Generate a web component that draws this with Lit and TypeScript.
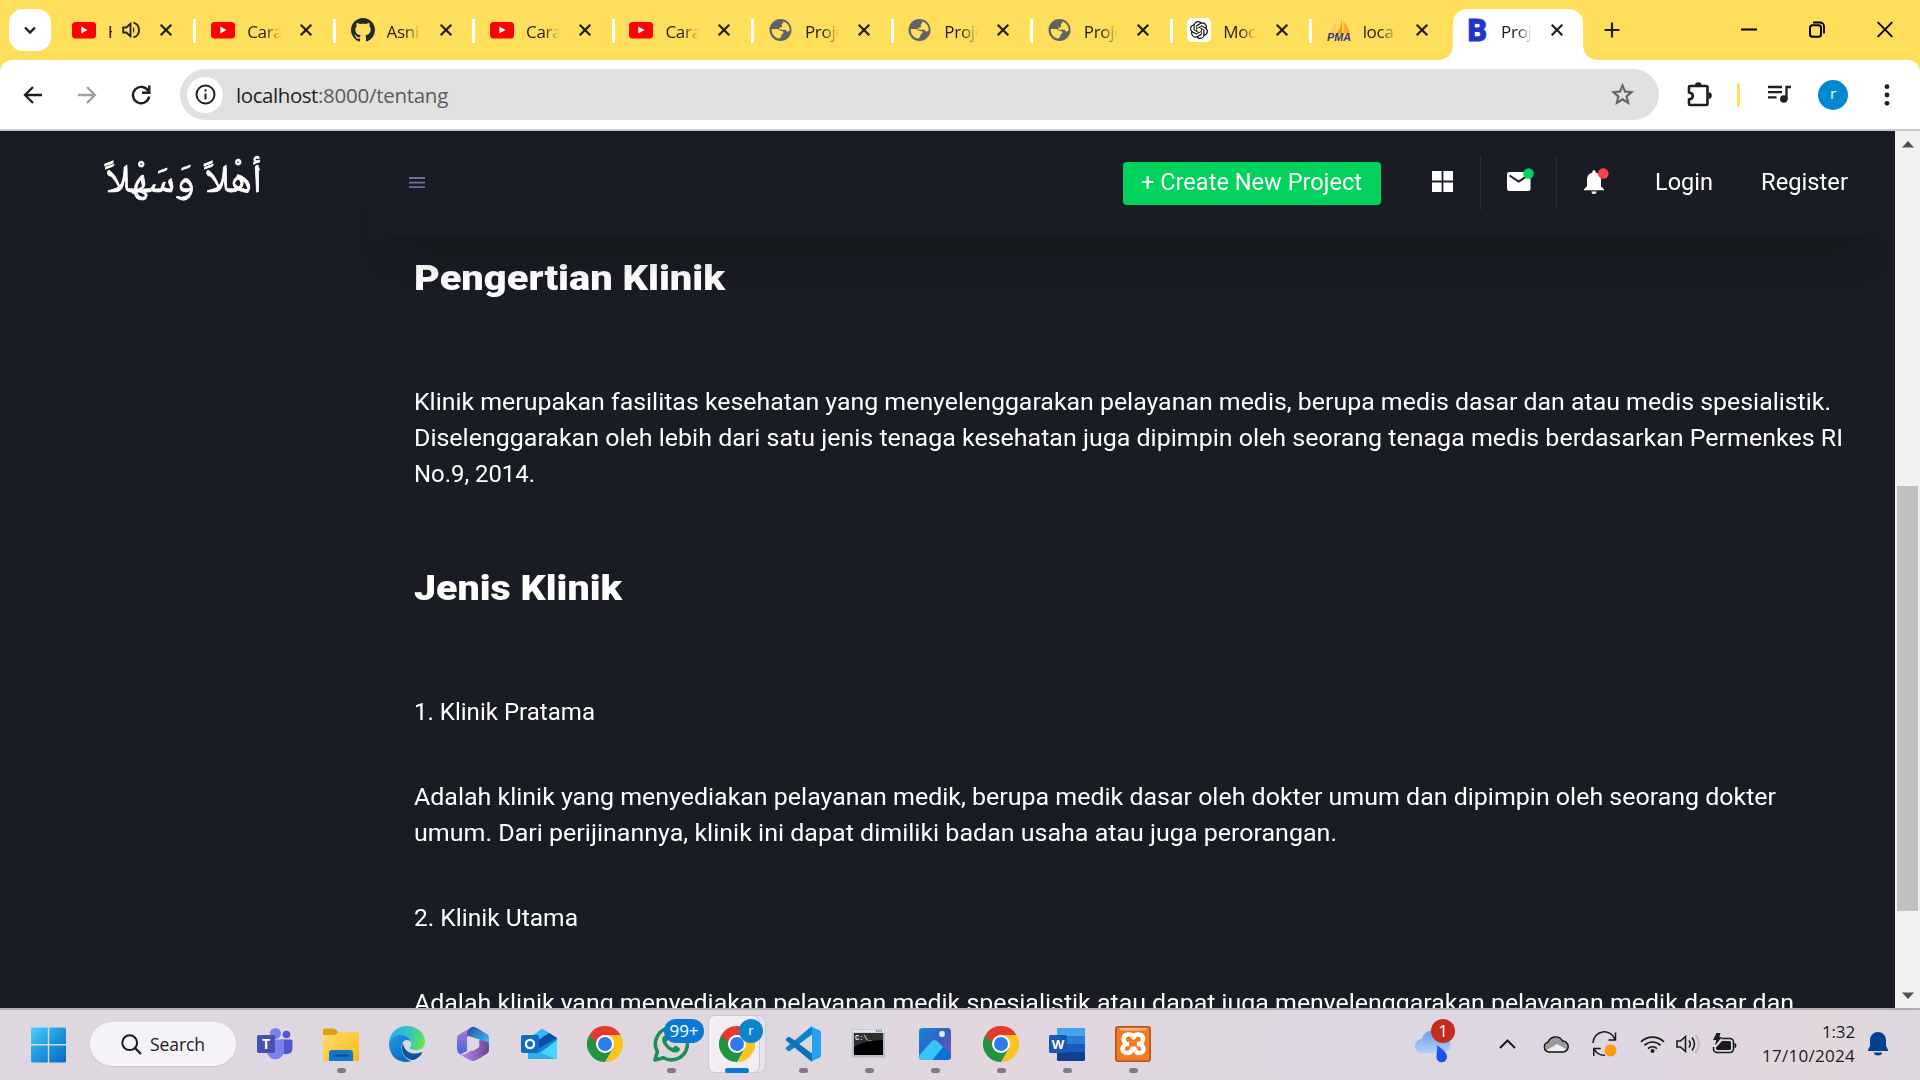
import { LitElement, html, svg, css, nothing } from "lit";
import { customElement, property } from "lit/decorators.js";

/** One line of text, fitted to a given measure by tracking or by widening. */
@customElement("fit-text")
class FitText extends LitElement {
  static styles = css`
    :host { display: block; white-space: nowrap; }
    .run { display: inline-block; white-space: pre; }
    .scaled { transform-origin: 0 50%; }
  `;
  @property() text = "";
  @property({ type: Number }) w = 0;
  @property({ type: Boolean }) scaled = false;
  render() {
    return html`<span class="run ${this.scaled ? "scaled" : ""}">${this.text}</span>`;
  }
  firstUpdated() {
    const run = this.renderRoot.querySelector(".run") as HTMLElement;
    const natural = run.getBoundingClientRect().width;
    if (!this.w || !natural) return;
    if (this.scaled) {
      this.style.width = `${this.w}px`;
      run.style.transform = `scaleX(${this.w / natural})`;
    } else run.style.letterSpacing = `${(this.w - natural) / this.text.length}px`;
  }
}

const youtube = svg`<svg width="24" height="24" viewBox="0 0 24 24"><rect y="4" width="24" height="16.400" rx="3.500" fill="#f00"/><path d="M9.300 8.600v7l6.200-3.500z" fill="#fff"/></svg>`;
const github = svg`<svg width="24" height="24" viewBox="0 0 16 16"><path fill="#24292f" d="M8 0C3.58 0 0 3.58 0 8c0 3.54 2.29 6.53 5.47 7.59.4.07.55-.17.55-.38 0-.19-.01-.82-.01-1.49-2.01.37-2.53-.49-2.69-.94-.09-.23-.48-.94-.82-1.13-.28-.15-.68-.52-.01-.53.63-.01 1.08.58 1.23.82.72 1.21 1.87.87 2.33.66.07-.52.28-.87.51-1.07-1.78-.2-3.64-.89-3.64-3.95 0-.87.31-1.59.82-2.15-.08-.2-.36-1.02.08-2.12 0 0 .67-.21 2.2.82.64-.18 1.32-.27 2-.27s1.36.09 2 .27c1.53-1.04 2.2-.82 2.2-.82.44 1.1.16 1.92.08 2.12.51.56.82 1.27.82 2.15 0 3.07-1.87 3.75-3.65 3.95.29.25.54.73.54 1.48 0 1.07-.01 1.93-.01 2.2 0 .21.15.46.55.38A8.01 8.01 0 0 0 16 8c0-4.42-3.58-8-8-8z"/></svg>`;
const globe = svg`<svg width="24" height="24" viewBox="0 0 24 24"><circle cx="11.500" cy="12" r="11" fill="#5f6368"/><path fill="#ffde5c" d="M14.500 3.500c3 .9 5.500 3.600 6.100 6.700v2.500c-.9.500-1.700 1-2.600.8-.9-.3-.7-1.600-1.600-1.800-1-.2-1.700.3-2.600 0h-2.600c-.9-.2-1.300-1.500-.6-2.100.7-.5 1.700 0 2.300-.7.600-.8-.5-1.500-.2-2.300.4-.8 1.500-.9 1.800-3.100zM2.800 11h5.300c1.500.2 2.200 1.300 3.400 1.800 1 .3 2.300 0 2.900 1 .5 1.200-.7 2-1.500 2.700-.9.700-.4 1.900-1.100 2.700-.5.600-1.300.9-1.700 1.300C6 20 2.400 16.300 2.800 11z"/></svg>`;
const gpt = svg`<svg width="24" height="24" viewBox="0 0 24 24"><rect width="24" height="24" rx="5" fill="#fff"/><path transform="translate(3 3) scale(.75)" fill="#111" d="M22.2819 9.8211a5.9847 5.9847 0 0 0-.5157-4.9108 6.0462 6.0462 0 0 0-6.5098-2.9A6.0651 6.0651 0 0 0 4.9807 4.1818a5.9847 5.9847 0 0 0-3.9977 2.9 6.0462 6.0462 0 0 0 .7427 7.0966 5.98 5.98 0 0 0 .511 4.9107 6.051 6.051 0 0 0 6.5146 2.9001A5.9847 5.9847 0 0 0 13.2599 24a6.0557 6.0557 0 0 0 5.7718-4.2058 5.9894 5.9894 0 0 0 3.9977-2.9001 6.0557 6.0557 0 0 0-.7475-7.0729zm-9.022 12.6081a4.4755 4.4755 0 0 1-2.8764-1.0408l.1419-.0804 4.7783-2.7582a.7948.7948 0 0 0 .3927-.6813v-6.7369l2.02 1.1686a.071.071 0 0 1 .038.052v5.5826a4.504 4.504 0 0 1-4.4945 4.4944zm-9.6607-4.1254a4.4708 4.4708 0 0 1-.5346-3.0137l.142.0852 4.783 2.7582a.7712.7712 0 0 0 .7806 0l5.8428-3.3685v2.3324a.0804.0804 0 0 1-.0332.0615L9.74 19.9502a4.4992 4.4992 0 0 1-6.1408-1.6464zM2.3408 7.8956a4.485 4.485 0 0 1 2.3655-1.9728V11.6a.7664.7664 0 0 0 .3879.6765l5.8144 3.3543-2.0201 1.1685a.0757.0757 0 0 1-.071 0l-4.8303-2.7865A4.504 4.504 0 0 1 2.3408 7.872zm16.5963 3.8558L13.1038 8.364 15.1192 7.2a.0757.0757 0 0 1 .071 0l4.8303 2.7913a4.4944 4.4944 0 0 1-.6765 8.1042v-5.6772a.79.79 0 0 0-.407-.667zm2.0107-3.0231l-.142-.0852-4.7735-2.7818a.7759.7759 0 0 0-.7854 0L9.409 9.2297V6.8974a.0662.0662 0 0 1 .0284-.0615l4.8303-2.7866a4.4992 4.4992 0 0 1 6.6802 4.66zM8.3065 12.863l-2.02-1.1638a.0804.0804 0 0 1-.038-.0567V6.0742a4.4992 4.4992 0 0 1 7.3757-3.4537l-.142.0805L8.704 5.459a.7948.7948 0 0 0-.3927.6813zm1.0976-2.3654l2.602-1.4998 2.6069 1.4998v2.9994l-2.5974 1.4997-2.6067-1.4997Z"/></svg>`;
const pma = svg`<svg width="24" height="24" viewBox="0 0 24 24"><path d="M9.500 1 8 15.500H1.500C5 12 8 7 9.500 1z" fill="#fcc27a"/><path d="M14 0c1 5-1 12-4.500 15.500H15C15.500 10 15.400 4 14 0z" fill="#f89c0e"/><path d="M16 3c3.500 3.500 6 8 7 12.500h-7C17 11 17 7 16 3z" fill="#fca53a"/><text x="0" y="23" font-family="Liberation Sans" font-weight="bold" font-style="italic" font-size="10" textLength="24" lengthAdjust="spacingAndGlyphs" fill="#35387d">PMA</text></svg>`;
const bee = svg`<svg width="24" height="24" viewBox="0 0 24 24"><text x="-.5" y="23" font-family="Roboto" font-weight="900" font-size="31" textLength="19.500" lengthAdjust="spacingAndGlyphs" fill="#2233c9" stroke="#2233c9" stroke-width=".9">B</text></svg>`;
const cross = svg`<svg class="x" width="14" height="14" viewBox="0 0 14 14"><path d="m1.700 1.700 10.600 10.600m0-10.600L1.700 12.300" stroke="#1f1f1f" stroke-width="2.200"/></svg>`;
const speaker = svg`<svg class="audio" width="18" height="18" viewBox="0 0 18 18"><path d="M1.200 6.500h3L8.500 2.800v12.400L4.200 11.500h-3z" fill="none" stroke="#1f1f1f" stroke-width="1.800"/><path d="M11 5.800c1.800 1.500 1.800 5 0 6.400z" fill="#1f1f1f"/><path d="M11.500 1.600c7.300 2 7.300 12.800 0 14.800" fill="none" stroke="#1f1f1f" stroke-width="1.800"/></svg>`;

interface Tab { icon: unknown; title: string; sound?: boolean; active?: boolean; }
const TABS: Tab[] = [
  { icon: youtube, title: "H", sound: true },
  { icon: youtube, title: "Cara" },
  { icon: github, title: "Asni" },
  { icon: youtube, title: "Cara" },
  { icon: youtube, title: "Cara" },
  { icon: globe, title: "Proje" },
  { icon: globe, title: "Proje" },
  { icon: globe, title: "Proje" },
  { icon: gpt, title: "Moc" },
  { icon: pma, title: "loca" },
  { icon: bee, title: "Proj", active: true },
];

@customElement("browser-chrome")
class BrowserChrome extends LitElement {
  static styles = css`
    :host { display: block; height: 131px; font-family: "Open Sans", "Noto Sans", sans-serif; color: #1f1f1f; background: #ffde5c; }
    svg { display: block; flex: none; }
    .strip { display: flex; height: 60px; }
    .drop { width: 42px; height: 42px; margin: 9px 6px 0 9px; border-radius: 14px; background: #fff; display: grid; place-items: center; flex: none; }
    .tab { box-sizing: border-box; width: 139.450px; height: 60px; padding: 0 0 0 14.700px; display: flex; align-items: center; position: relative; flex: none; }
    .tab::after { content: ""; width: 3px; height: 24px; background: #fff; position: absolute; right: 0; top: 19px; }
    .tab.last::after, .tab.active::after { display: none; }
    .label { width: 35px; margin: 3px 17px 0 12px; overflow: hidden; font-size: 17px; letter-spacing: -.3px; line-height: 26px; white-space: nowrap; -webkit-mask-image: linear-gradient(90deg, #000 50%, transparent 98%); mask-image: linear-gradient(90deg, #000 50%, transparent 98%); }
    .label.tiny { width: 4px; margin: 3px 10px 0 12px; -webkit-mask-image: none; mask-image: none; }
    .audio { margin-right: 19px; }
    .active { width: 130px; height: 51px; margin: 9px 0 0 1.500px; padding-bottom: 9px; background: #fff; border-radius: 14px 14px 0 0; }
    .active .label { width: 32px; margin: 3px 17px 0 9.500px; }
    .active::before { content: ""; position: absolute; left: -14px; bottom: 0; width: 14px; height: 14px; background: radial-gradient(circle at 0 0, transparent 13.500px, #fff 14px); }
    .flare { position: absolute; right: -14px; bottom: 0; width: 14px; height: 14px; background: radial-gradient(circle at 100% 0, transparent 13.500px, #fff 14px); }
    .plus { margin: 22px 0 0 21.500px; }
    .win { display: flex; gap: 52px; margin: 21px 27px 0 auto; }
    .bar { display: flex; align-items: center; height: 69px; background: #fff; border-radius: 12px 12px 0 0; border-bottom: 2px solid #cacaca; }
    .back { margin-left: 21px; }
    .fwd { margin-left: 30px; }
    .reload { margin-left: 30px; }
    .omni { box-sizing: border-box; display: flex; align-items: center; width: 1479px; height: 51px; margin-left: 27px; padding: 0 23px 0 7px; border-radius: 26px; background: #e0e0e0; font-size: 20.500px; }
    .info { width: 36px; height: 36px; border-radius: 50%; background: #fff; display: grid; place-items: center; margin-right: 13px; }
    .url { display: flex; }
    .rest { color: #5b5b5b; }
    .star { margin-left: auto; }
    .ext { margin-left: 26px; }
    .sep { width: 3px; height: 24px; background: #ffde5c; border-radius: 2px; margin-left: 24px; }
    .media { margin-left: 27px; }
    .avatar { width: 30px; height: 30px; border-radius: 50%; background: #0288d1; color: #fff; font-size: 15px; line-height: 27px; text-align: center; margin-left: 26px; }
    .dots { margin-left: 36px; }
  `;
  render() {
    return html`
      <div class="strip">
        <div class="drop"><svg width="12" height="10" viewBox="0 0 12 10"><path d="m1 2.500 5 5 5-5" fill="none" stroke="#1f1f1f" stroke-width="2.400"/></svg></div>
        ${TABS.map((t, i) => html`
          <div class="tab ${t.active ? "active" : ""} ${i === TABS.length - 2 ? "last" : ""}">
            ${t.icon}
            <span class="label ${t.sound ? "tiny" : ""}">${t.title}</span>
            ${t.sound ? speaker : nothing}${cross}
            ${t.active ? html`<span class="flare"></span>` : nothing}
          </div>`)}
        <svg class="plus" width="16" height="16" viewBox="0 0 16 16"><path d="M8 .5v15M.5 8h15" stroke="#1f1f1f" stroke-width="2.200"/></svg>
        <div class="win">
          <svg width="16" height="17" viewBox="0 0 16 17"><path d="M0 8.500h16" stroke="#000" stroke-width="2"/></svg>
          <svg width="16" height="17" viewBox="0 0 16 17"><rect x="1" y="4.300" width="11" height="11.500" rx="2.500" fill="none" stroke="#000" stroke-width="2"/><path d="M4 1.500h7a4 4 0 0 1 4 4v7" fill="none" stroke="#000" stroke-width="1.800"/></svg>
          <svg width="16" height="17" viewBox="0 0 16 17"><path d="m.7 1.200 14.600 14.600m0-14.600L.7 15.800" stroke="#000" stroke-width="1.800"/></svg>
        </div>
      </div>
      <div class="bar">
        <svg class="back" width="24" height="24" viewBox="0 0 24 24"><path d="M21 12H4.500M12 4l-8 8 8 8" fill="none" stroke="#1f1f1f" stroke-width="2.300"/></svg>
        <svg class="fwd" width="24" height="24" viewBox="0 0 24 24"><path d="M3 12h16.500M12 4l8 8-8 8" fill="none" stroke="#a0a0a0" stroke-width="2.300"/></svg>
        <svg class="reload" width="24" height="24" viewBox="0 0 24 24"><path d="M19.600 8.700A8.200 8.200 0 1 0 20.200 13.500" fill="none" stroke="#1f1f1f" stroke-width="2.400"/><path d="M20.300 2.500v7.300H13" fill="none" stroke="#1f1f1f" stroke-width="2.400"/></svg>
        <div class="omni">
          <div class="info"><svg width="21" height="21" viewBox="0 0 21 21"><circle cx="10.500" cy="10.500" r="9" fill="none" stroke="#1f1f1f" stroke-width="2"/><path d="M10.500 9.500v6M10.500 5.300v2.200" stroke="#1f1f1f" stroke-width="2"/></svg></div>
          <div class="url"><fit-text text="localhost" w="82"></fit-text><fit-text class="rest" text=":8000/tentang" w="130"></fit-text></div>
          <svg class="star" width="27" height="27" viewBox="0 0 24 24"><path fill="#5f6368" stroke="#5f6368" stroke-width=".3" d="m22 9.240-7.190-.62L12 2 9.190 8.630 2 9.240l5.460 4.730L5.820 21 12 17.270 18.180 21l-1.630-7.030L22 9.240zM12 15.400l-3.760 2.270 1-4.280-3.320-2.880 4.380-.38L12 6.100l1.710 4.040 4.380.38-3.320 2.880 1 4.280L12 15.400z"/></svg>
        </div>
        <svg class="ext" width="28" height="28" viewBox="0 0 28 28"><path d="M5 5h16.500a1 1 0 0 1 1 1v17a1 1 0 0 1-1 1H5a1 1 0 0 1-1-1v-4.700c5-.5 5-6.300 0-6.800V6a1 1 0 0 1 1-1z" fill="none" stroke="#1f1f1f" stroke-width="2.600" stroke-linejoin="round"/><path d="M10 4.500a3.300 3.300 0 0 1 6.600 0M23.500 11.300a3.300 3.300 0 0 1 0 6.600" fill="#1f1f1f"/></svg>
        <div class="sep"></div>
        <svg class="media" width="25" height="20" viewBox="0 0 25 20"><path d="M1 2h14M1 7.200h14M1 12.400h8.500M24 2h-4.500v12" fill="none" stroke="#1f1f1f" stroke-width="2.300"/><circle cx="16.800" cy="14" r="3.800" fill="#1f1f1f"/></svg>
        <div class="avatar">r</div>
        <svg class="dots" width="6" height="24" viewBox="0 0 6 24"><g fill="#1f1f1f"><circle cx="3" cy="3.700" r="2.400"/><circle cx="3" cy="12" r="2.400"/><circle cx="3" cy="20.300" r="2.400"/></g></svg>
      </div>`;
  }
}

@customElement("clinic-page")
class ClinicPage extends LitElement {
  static styles = css`
    :host { display: flex; height: 877px; overflow: hidden; background: #191c24; color: #fff; font-family: Roboto, "Noto Sans", sans-serif; }
    svg { display: block; flex: none; }
    .site { flex: 1; display: grid; grid-template: 105px 1fr / 366px 1fr; min-width: 0; overflow: hidden; }
    .brand { padding: 16px 0 0 106px; font-family: "Times New Roman", "Noto Naskh Arabic", "DejaVu Sans", serif; font-size: 40px; line-height: 64px; -webkit-text-stroke: .7px #fff; }
    .nav { background: #191c24; display: flex; align-items: center; padding: 0 0 1px 43px; position: relative; z-index: 1; box-shadow: 0 44px 44px -42px #101011; }
    .create { display: flex; width: 222px; height: 43px; margin-left: 698px; padding: 0 18px; background: #00d25b; border-radius: 4px; font-size: 23px; line-height: 41px; }
    .line { width: 1px; height: 54px; background: #2c2e33; }
    .grid { margin: 0 27px 4px 51px; }
    .mail { margin: 0 22px 7px 26px; }
    .bell { margin: 0 46px 4px 26px; }
    .link { font-size: 23px; line-height: 30px; }
    .link + .link { margin-left: 48px; }
    .body { grid-column: 2; padding: 21px 31px 0 48px; min-width: 0; }
    .h { font-size: 34.500px; font-weight: 900; line-height: 42px; }
    .rule { height: 1px; margin: 24px 0 60px; background: #171920; }
    .rule.even { margin: 24px 0; }
    .p { font-size: 24px; line-height: 36px; }
    .h.next { margin-top: 75px; }
    .scroll { width: 25px; background: #f1f1f1; display: flex; flex-direction: column; align-items: center; }
    .up { margin-top: 10px; }
    .thumb { width: 21px; height: 425px; margin-top: 338px; background: #c1c1c1; }
    .down { margin: auto 0 9px; }
  `;
  render() {
    return html`
      <div class="site">
        <div class="brand"><fit-text scaled text="أهْلاً وَسَهْلاً" w="156"></fit-text></div>
        <div class="nav">
          <svg width="16" height="12" viewBox="0 0 16 12"><path d="M0 1h16M0 5.600h16M0 10.200h16" stroke="#6c7293" stroke-width="1.800"/></svg>
          <div class="create"><fit-text scaled text="+ Create New Project" w="221"></fit-text></div>
          <svg class="grid" width="21" height="21" viewBox="0 0 21 21"><path d="M0 0h9.600v9.600H0zM11.400 0H21v9.600h-9.600zM0 11.400h9.600V21H0zM11.400 11.400H21V21h-9.600z" fill="#fff"/></svg>
          <div class="line"></div>
          <svg class="mail" width="27" height="24" viewBox="0 0 27 24"><rect y="4" width="23.500" height="19" rx="2.500" fill="#fff"/><path d="m2.500 7.500 9.200 6 9.200-6" fill="none" stroke="#191c24" stroke-width="2"/><circle cx="21.500" cy="5.500" r="5.300" fill="#00d25b"/></svg>
          <div class="line"></div>
          <svg class="bell" width="26" height="27" viewBox="0 0 26 27"><path d="M11 2.200c.9 0 1.600.7 1.600 1.600v.7c3.300.8 5.400 3.700 5.400 7.200v6.500l3 3v1H1v-1l3-3v-6.500C4 8.200 6.100 5.300 9.400 4.500v-.7c0-.9.7-1.600 1.600-1.600zM8.500 23.400h5a2.500 2.500 0 0 1-5 0z" fill="#fff"/><circle cx="20.300" cy="5.500" r="5.300" fill="#fc424a"/></svg>
          <fit-text scaled class="link" text="Login" w="58"></fit-text>
          <fit-text scaled class="link" text="Register" w="87"></fit-text>
        </div>
        <div class="body">
          <fit-text scaled class="h" text="Pengertian Klinik" w="311"></fit-text>
          <div class="rule"></div>
          <fit-text scaled class="p" text="Klinik merupakan fasilitas kesehatan yang menyelenggarakan pelayanan medis, berupa medis dasar dan atau medis spesialistik." w="1417"></fit-text>
          <fit-text scaled class="p" text="Diselenggarakan oleh lebih dari satu jenis tenaga kesehatan juga dipimpin oleh seorang tenaga medis berdasarkan Permenkes RI" w="1429"></fit-text>
          <fit-text scaled class="p" text="No.9, 2014." w="121"></fit-text>
          <fit-text scaled class="h next" text="Jenis Klinik" w="208"></fit-text>
          <div class="rule"></div>
          <fit-text scaled class="p" text="1. Klinik Pratama" w="181"></fit-text>
          <div class="rule even"></div>
          <fit-text scaled class="p" text="Adalah klinik yang menyediakan pelayanan medik, berupa medik dasar oleh dokter umum dan dipimpin oleh seorang dokter" w="1362"></fit-text>
          <fit-text scaled class="p" text="umum. Dari perijinannya, klinik ini dapat dimiliki badan usaha atau juga perorangan." w="923"></fit-text>
          <div class="rule even"></div>
          <fit-text scaled class="p" text="2. Klinik Utama" w="164"></fit-text>
          <div class="rule even"></div>
          <fit-text scaled class="p" text="Adalah klinik yang menyediakan pelayanan medik spesialistik atau dapat juga menyelenggarakan pelayanan medik dasar dan" w="1380"></fit-text>
        </div>
      </div>
      <div class="scroll">
        <svg class="up" width="12" height="7" viewBox="0 0 12 7"><path d="M6 0 0 6.500h12z" fill="#505050"/></svg>
        <div class="thumb"></div>
        <svg class="down" width="12" height="7" viewBox="0 0 12 7"><path d="M6 7 0 .5h12z" fill="#505050"/></svg>
      </div>`;
  }
}

const teams = svg`<svg width="36" height="36" viewBox="0 0 36 36"><circle cx="29.500" cy="8.500" r="3.800" fill="#5059c9"/><path d="M24 13.500h10a1.500 1.500 0 0 1 1.500 1.500v7.500a6 6 0 0 1-11.500 2z" fill="#5059c9"/><circle cx="18.500" cy="7.500" r="5.500" fill="#7b83eb"/><path d="M10.500 13.500h15a1.500 1.500 0 0 1 1.500 1.500v10a8.500 8.500 0 0 1-17 0z" fill="#7b83eb"/><rect y="9" width="18" height="18" rx="1.800" fill="#464eb8"/><text x="9" y="23" text-anchor="middle" font-family="Open Sans" font-weight="bold" font-size="14" fill="#fff">T</text></svg>`;
const folder = svg`<svg width="36" height="36" viewBox="0 0 36 36"><defs><linearGradient id="fo" x2="1" y2="1"><stop stop-color="#ffdc74"/><stop offset="1" stop-color="#fdb813"/></linearGradient></defs><path d="M0 12V4a1.500 1.500 0 0 1 1.500-1.500h9.300c1.600 0 2.600 2.500 4.500 3V12z" fill="#e0a006"/><path d="M0 9h11.500c2 0 2.600-3 5-3H34.500A1.500 1.500 0 0 1 36 7.500v26a1.500 1.500 0 0 1-1.500 1.500h-33A1.500 1.500 0 0 1 0 33.500z" fill="url(#fo)"/><path d="M6 35v-8a3 3 0 0 1 3-3h18a3 3 0 0 1 3 3v8z" fill="#0f78c8"/><path d="M11 29.500h14" stroke="#0a4f8f" stroke-width="2" stroke-linecap="round"/></svg>`;
const edge = svg`<svg width="36" height="36" viewBox="0 0 36 36"><defs><linearGradient id="e1" y1=".3" x2="1" y2=".5"><stop stop-color="#2faee8"/><stop offset=".55" stop-color="#30c6c4"/><stop offset="1" stop-color="#6be24e"/></linearGradient><linearGradient id="e2" x2=".6" y2="1"><stop stop-color="#1d9de0"/><stop offset="1" stop-color="#0a6ac8"/></linearGradient></defs><path d="M0 18C0 7 8 0 18 0s18 7 18 15.500c0 5.500-4 8.700-8.500 8.700-4 0-6.500-1.200-6.500-2.700 0-.8 1.300-1.500 1.300-4 0-3-4-6-9.300-6C6.500 11.500 1 14 0 18z" fill="url(#e1)"/><path d="M0 18c.5-5 5-9 11-9 5.500 0 11 3.500 11 8.500 0-2-2-3.500-4.300-3.500-3 0-5.200 3-5.200 7.500 0 6 4 12.500 10 13.500C9.500 38.800 0 30 0 18z" fill="url(#e2)"/><path d="M14 17c-3 7 1 17 10.500 17 3.500-1 7-4 8.700-7 .3-.6-.2-1-.8-.7C25 29.500 15 27 14 17z" fill="#10529d"/></svg>`;
const m365 = svg`<svg width="36" height="36" viewBox="0 0 36 36"><defs><linearGradient id="m1" x2="0" y2="1"><stop stop-color="#b57bdc"/><stop offset="1" stop-color="#3d67d6"/></linearGradient><linearGradient id="m2" x2="1" y2="1"><stop stop-color="#1d4fa8"/><stop offset="1" stop-color="#4bd4f8"/></linearGradient><linearGradient id="m3" x2="1"><stop stop-color="#c58df5"/><stop offset="1" stop-color="#6d4591"/></linearGradient></defs><path d="M17 1 4 8.500Q2 9.600 2 12v11q0 3 3 5.500l7-3.500V11l5-3z" fill="url(#m1)"/><path d="M17 1q2-.5 4 .5l11 6.500q2 1.200 2 3.500v13l-9.500-6v-5L12 9.500Q12 3 17 1z" fill="url(#m2)"/><path d="M34 18v6q0 2.500-2 3.800l-11 6.500q-3 1.500-6 0L4 28q5 1.500 8-1l12.500-7v-6Q32 14 34 18z" fill="url(#m3)"/><path d="m18 11.800 5.800 3.300v6.400L18 25l-5.800-3.500v-6.400z" fill="#ddd7e0"/></svg>`;
const outlook = svg`<svg width="36" height="36" viewBox="0 0 36 36"><path d="M7 13 21 3l15 9v19a2 2 0 0 1-2 2H9a2 2 0 0 1-2-2z" fill="#1682d4"/><path d="M11 10 21 3l7 4-14 9z" fill="#35b8f1"/><path d="m28 7 8 5-18 10V14z" fill="#0a4ea6"/><path d="M36 14v17a2 2 0 0 1-2 2H11z" fill="#45d6fa"/><path d="m7 21 27 12H9a2 2 0 0 1-2-2z" fill="#2eaee9"/><rect y="9" width="18" height="18" rx="1.800" fill="#0f6cc4"/><circle cx="9" cy="18" r="4.100" fill="none" stroke="#fff" stroke-width="2.300"/></svg>`;
const chrome = svg`<svg width="36" height="36" viewBox="0 0 36 36"><path d="M18 9h15.590A18 18 0 0 1 18 36l8-13.500z" fill="#fcc31e"/><path d="M2.410 9A18 18 0 0 0 18 36l7.800-13.500L18 18z" fill="#229342"/><path d="M2.410 9A18 18 0 0 1 33.590 9H18a9 9 0 0 0-8.500 12z" fill="#e33b2e"/><path d="M2.410 9 10.200 22.500 12 20z" fill="#229342"/><circle cx="18" cy="18" r="9" fill="#fff"/><circle cx="18" cy="18" r="7" fill="#2f7aec"/></svg>`;
const whatsapp = svg`<svg width="36" height="36" viewBox="0 0 36 36"><path d="M2 34l2.400-8.500A16 16 0 1 1 10.500 31.700z" fill="none" stroke="#1c8f58" stroke-width="3.600" stroke-linejoin="round"/><path d="M12.500 9.500c-1.500 0-3.500 2-3.300 4.800.3 5 7.800 12.300 13 12.300 3 0 4.800-1.800 4.800-3.800 0-1-4-3.300-5-3-1 .3-1.500 2.200-2.600 2-2-.5-5.200-3.600-5.800-5.400-.2-1 1.400-1.500 1.500-2.600 0-1-1.500-4.300-2.600-4.300z" fill="#1c8f58"/></svg>`;
const vscode = svg`<svg width="36" height="36" viewBox="0 0 36 36"><path d="M1 23.200 3.200 25q1 .6 2-.2L27 8.500V0L1 21.500q-.8.800 0 1.700z" fill="#0a84cf"/><path d="M1 12.800 3.200 11q1-.6 2 .2L27 27.500V36L1 14.500q-.8-.8 0-1.700z" fill="#0b72ba"/><path d="m25.500.2 9 4.100Q36 5 36 6.500v23q0 1.500-1.500 2.200l-9 4.100q1.500-.8 1.500-3V3q0-2-1.500-2.800z" fill="#27a0ef"/></svg>`;
const cmd = svg`<svg width="36" height="36" viewBox="0 0 36 36"><rect x="1" y="3.500" width="33" height="28" rx="1" fill="#b6bcc2"/><rect x="1.500" y="4" width="32" height="2.500" fill="#e3e8ec"/><path d="M25 5h6" stroke="#52708c" stroke-width="1.300" stroke-dasharray="1.300 1"/><rect x="3" y="7" width="29" height="22" fill="#000"/><path d="M3 7h29v7Q14 14 3 21z" fill="#303030"/><text x="4" y="13.500" font-family="Liberation Mono" font-size="7" font-weight="bold" fill="#eee">C:\\_</text></svg>`;
const photos = svg`<svg width="36" height="36" viewBox="0 0 36 36"><defs><linearGradient id="ph" x2="1" y2=".8"><stop stop-color="#1584d8"/><stop offset=".6" stop-color="#355fc0"/><stop offset="1" stop-color="#7d55ad"/></linearGradient><clipPath id="pc"><rect x="2" y="2" width="32" height="32" rx="3.500"/></clipPath></defs><g clip-path="url(#pc)"><rect x="2" y="2" width="32" height="32" fill="url(#ph)"/><path d="m12 34 10.500-13q2.500-2.500 5 0L38 32v6z" fill="#0a72d4"/><path d="M-2 34 14.500 15.500q3-3 6 0L26 21 13 37z" fill="#36c5f4"/><circle cx="25" cy="8" r="2.900" fill="#e8eefa"/></g></svg>`;
const word = svg`<svg width="36" height="36" viewBox="0 0 36 36"><rect x="8" y="2" width="28" height="33" rx="1.500" fill="#103f91"/><path d="M8 3.500A1.500 1.500 0 0 1 9.500 2h25A1.500 1.500 0 0 1 36 3.500V10H8z" fill="#41a5ee"/><path d="M8 10h28v8H8z" fill="#2b7cd3"/><path d="M8 18h28v8H8z" fill="#185abd"/><rect y="9" width="18" height="18" rx="1.500" fill="#1a55b8"/><text x="9" y="23" text-anchor="middle" font-family="Open Sans" font-weight="bold" font-size="13" fill="#fff">W</text></svg>`;
const xampp = svg`<svg width="36" height="36" viewBox="0 0 36 36"><rect x=".8" y=".8" width="34.400" height="34.400" rx="2.500" fill="#f47a20" stroke="#b5561a" stroke-width="1.600"/><path d="M4 2h28l-2 2.500H6z" fill="#fbb88a"/><path d="M13.500 18H24M18.500 11.500c-1.500-4.500-10-4-10 1.200 0 2.600 1.300 3.600 2.400 5.300-1.600 1.200-3.400 2.500-3.400 5.300 0 5 8.500 5 9.500.2l1-1.500h1l1 1.500c1 4.800 8.500 4.800 8.500-.2 0-2.800-1.500-4.100-3-5.300 1.100-1.700 2.500-2.700 2.500-5.300 0-5.200-8-5.700-9.500-1.200z" fill="none" stroke="#fff" stroke-width="4.400" stroke-linecap="round" stroke-linejoin="round"/><path d="M14 18h8" stroke="#f47a20" stroke-width="5"/></svg>`;

interface App { icon: unknown; mark?: string; badge?: string; active?: boolean; }
const APPS: App[] = [
  { icon: teams },
  { icon: folder, mark: "dot" },
  { icon: edge },
  { icon: m365 },
  { icon: outlook },
  { icon: chrome },
  { icon: whatsapp, mark: "dot", badge: "99+" },
  { icon: chrome, mark: "run", badge: "r", active: true },
  { icon: vscode, mark: "dot" },
  { icon: cmd, mark: "dot" },
  { icon: photos, mark: "dot" },
  { icon: chrome, mark: "dot" },
  { icon: word, mark: "dot" },
  { icon: xampp, mark: "dot" },
];

@customElement("task-bar")
class TaskBar extends LitElement {
  static styles = css`
    :host { box-sizing: border-box; display: flex; align-items: center; height: 72px; border-top: 2px solid #b3aeb4; color: #1b1b1b; font-family: "Open Sans", "Noto Sans", sans-serif; background: linear-gradient(90deg, #ded7df 0, #dfd7e0 45%, #e3d6df 53%, #dcd7df 63%, #ddd7e4 82%, #e3d6dd 95%, #ddd7df 100%); }
    svg { display: block; flex: none; }
    .start { margin-left: 31px; margin-bottom: 1px; }
    .search { box-sizing: border-box; display: flex; align-items: center; width: 146px; height: 44px; margin: 0 6px 2px 23px; padding-left: 31px; gap: 8px; border-radius: 22px; background: #f5f3f7; box-shadow: 0 1px 1px #c9c3cb; font-size: 17.500px; flex: none; }
    .app { position: relative; display: grid; place-items: center; width: 66px; height: 56px; margin-bottom: 2px; flex: none; }
    .app > svg { position: relative; z-index: 1; }
    .tile { position: absolute; inset: 0 11px 0 5px; border-radius: 6px; background: #f1edf3; box-shadow: 0 0 0 1px #cfc9d2; }
    .under { position: absolute; inset: 0 5px 0 20px; border-radius: 6px; background: #e8e3ea; box-shadow: 0 0 0 1px #cfc9d2; }
    .dot, .run { position: absolute; bottom: -1px; left: 28.500px; width: 9px; height: 5px; border-radius: 3px; background: #807b82; z-index: 1; }
    .run { left: 21px; width: 24px; background: #0a78d4; }
    .badge { position: absolute; z-index: 2; background: #0a78d4; color: #fff; }
    .count { left: 26px; top: 3px; width: 40px; height: 24px; border-radius: 12px; font-size: 17px; line-height: 24px; text-align: center; }
    .who { left: 35px; top: 3px; width: 24px; height: 24px; border-radius: 50%; font-size: 13px; line-height: 22px; text-align: center; background: #0b84cc; }
    .tray { display: flex; align-items: center; margin-left: auto; padding: 0 32px 2px 0; }
    .weather { position: relative; margin-right: 46px; }
    .alert { position: absolute; left: 17px; top: -6px; width: 24px; height: 24px; border-radius: 50%; background: #c42b1c; color: #fff; font-size: 17px; line-height: 23px; text-align: center; }
    .clock { display: flex; flex-direction: column; align-items: flex-end; width: 93px; margin: 0 13px 0 25px; font-size: 17px; line-height: 24.500px; }
    .s1 { margin-right: 27px; } .s2 { margin-right: 23px; } .s3 { margin-right: 23px; } .s4 { margin-right: 11px; } .s5 { margin-right: 11px; }
  `;
  render() {
    return html`
      <svg class="start" width="36" height="36" viewBox="0 0 36 36"><defs><linearGradient id="w" gradientUnits="userSpaceOnUse" x2="36" y2="36"><stop stop-color="#4fd0ff"/><stop offset=".5" stop-color="#1e96e0"/><stop offset="1" stop-color="#0468c8"/></linearGradient></defs><path fill="url(#w)" d="M1.500.5h15.300v16.600H0V2A1.500 1.500 0 0 1 1.500.5zM18.200.5H33.500A1.500 1.500 0 0 1 35 2v15.100H18.200zM0 18.500h16.800V35.500H1.500A1.500 1.500 0 0 1 0 34zM18.200 18.500H35V34a1.500 1.500 0 0 1-1.500 1.500H18.200z"/></svg>
      <div class="search">
        <svg width="21" height="21" viewBox="0 0 21 21"><circle cx="8.700" cy="8.700" r="7.400" fill="none" stroke="#1b1b1b" stroke-width="2"/><path d="m14 14 6 6" stroke="#1b1b1b" stroke-width="2.200"/></svg>
        <fit-text text="Search" w="55"></fit-text>
      </div>
      ${APPS.map((a) => html`
        <div class="app">
          ${a.active ? html`<span class="under"></span><span class="tile"></span>` : nothing}
          ${a.icon}
          ${a.mark ? html`<span class=${a.mark}></span>` : nothing}
          ${a.badge ? html`<span class="badge ${a.active ? "who" : "count"}">${a.badge}</span>` : nothing}
        </div>`)}
      <div class="tray">
        <div class="weather">
          <svg width="39" height="38" viewBox="0 0 39 38"><defs><linearGradient id="cl" x2="0" y2="1"><stop stop-color="#6c9de8"/><stop offset="1" stop-color="#b0d0fb"/></linearGradient></defs><path d="M8 28a7 7 0 0 1 0-14 10.500 10.500 0 0 1 20-2 8 8 0 0 1 1 16z" fill="url(#cl)"/><path d="M23 20c5 4 10 7.500 10 12a5.300 5.300 0 0 1-10.600 0c0-4 1.500-8 .6-12z" fill="#1a56e8"/></svg>
          <span class="alert">1</span>
        </div>
        <svg class="s1" width="17" height="12" viewBox="0 0 17 12"><path d="m1 10 7.500-7.500L16 10" fill="none" stroke="#1b1b1b" stroke-width="2"/></svg>
        <svg class="s2" width="26" height="20" viewBox="0 0 26 20"><path d="M6 18a5 5 0 0 1-1-9.800A8 8 0 0 1 19.500 7 5.500 5.500 0 0 1 20 18z" fill="#9b9b9b"/><path d="m4 16 10-6 9 5q-1 3-4 3H6z" fill="#eee"/><path d="M6 18a5 5 0 0 1-1-9.800A8 8 0 0 1 19.500 7 5.500 5.500 0 0 1 20 18z" fill="none" stroke="#111" stroke-width="1.400"/></svg>
        <svg class="s3" width="25" height="26" viewBox="0 0 25 26"><path d="M1 12A11.300 11.300 0 0 1 23 8.500M23.500 1.500v7.500h-7M13 24.300A11.500 11.500 0 0 1 2 17.500M1.800 25v-7.500h7" fill="none" stroke="#1b1b1b" stroke-width="1.500"/><circle cx="18.500" cy="19.500" r="6" fill="#ff9a0a"/></svg>
        <svg class="s4" width="25" height="20" viewBox="0 0 25 20"><g fill="none" stroke="#1b1b1b" stroke-width="1.700"><path d="M1 7.800a16.300 16.300 0 0 1 23 0M4.500 11.300a11.400 11.400 0 0 1 16 0M8 14.600a6.400 6.400 0 0 1 9 0"/></g><circle cx="12.500" cy="17" r="2" fill="#1b1b1b"/></svg>
        <svg class="s5" width="25" height="20" viewBox="0 0 25 20"><g fill="none" stroke="#1b1b1b" stroke-width="1.600"><path d="M1 7v6h3.500l5 4.500v-15L4.500 7zM13 6.500q2.500 3.500 0 7M16 3.500q5 6.500 0 13"/><path d="M19.500 1q7 9 0 18" stroke="#b9b3bb"/></g></svg>
        <svg width="25" height="22" viewBox="0 0 25 22"><path d="M9.500 5.500h8.500a3.500 3.500 0 0 1 3.500 3.500v7a3.500 3.500 0 0 1-3.500 3.500H5A3.500 3.500 0 0 1 1.500 16v-2" fill="none" stroke="#1b1b1b" stroke-width="1.600"/><path d="M10 8h7.500a1.500 1.500 0 0 1 1.500 1.500v6a1.500 1.500 0 0 1-1.500 1.500H5.500A1.500 1.500 0 0 1 4 15.500v-1zM22.500 10q2 0 2 2.500t-2 2.500zM4.500 0h4L7.300 4H10l-7 8.500L4.300 7H1z" fill="#1b1b1b"/></svg>
        <div class="clock"><fit-text text="1:32" w="33"></fit-text><fit-text text="17/10/2024" w="93"></fit-text></div>
        <svg width="20" height="24" viewBox="0 0 20 24"><path d="M10 0a8 8 0 0 1 8 8v6l2 3.800v1.200H0v-1.200L2 14V8a8 8 0 0 1 8-8zM6 20.500h8a4 3 0 0 1-8 0z" fill="#00408f"/></svg>
      </div>`;
  }
}

@customElement("app-root")
class AppRoot extends LitElement {
  static styles = css`
    :host { display: flex; flex-direction: column; width: 1920px; height: 1080px; overflow: hidden; }
  `;
  render() {
    return html`<browser-chrome></browser-chrome><clinic-page></clinic-page><task-bar></task-bar>`;
  }
}
